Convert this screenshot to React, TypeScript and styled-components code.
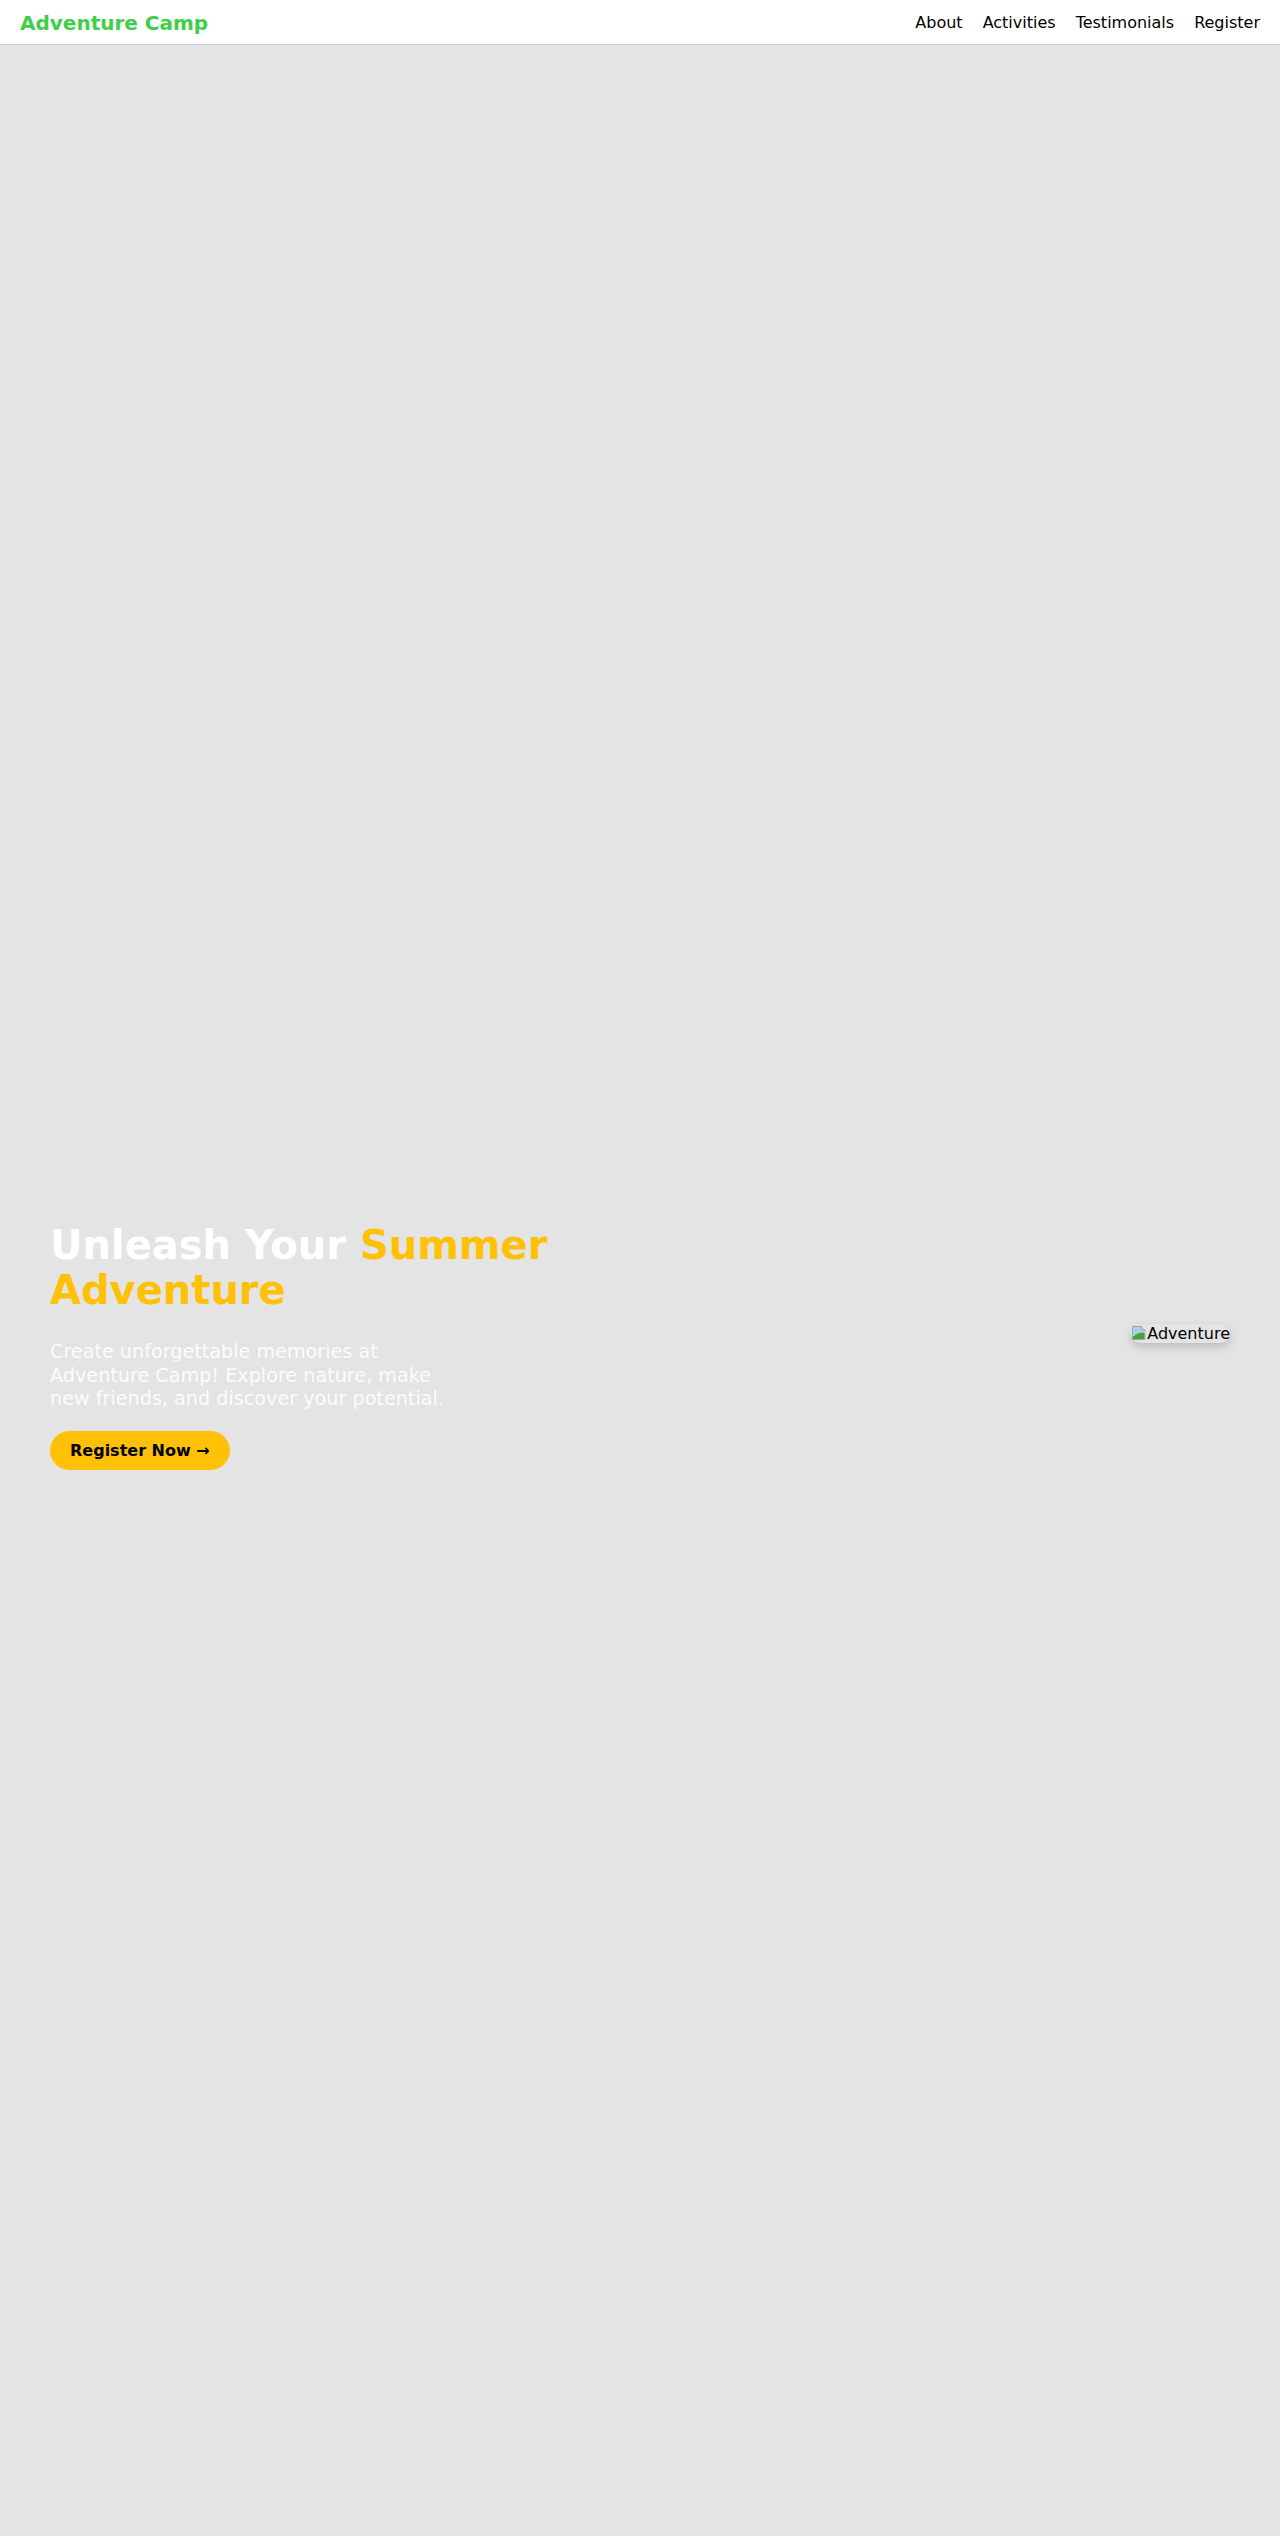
import styled, { createGlobalStyle } from 'styled-components';

const GlobalStyle = createGlobalStyle`
  * {
    box-sizing: border-box;
  }

  body {
    margin: 0;
    font-family: "DejaVu Sans", "Liberation Sans", sans-serif;
    background: #e4e4e4;
  }
`;

const Header = styled.header`
  display: flex;
  justify-content: space-between;
  align-items: center;
  height: 45px;
  padding: 1px 20px 0;
  background: #fff;
  border-bottom: 1px solid #cbcbcb;
`;

const Logo = styled.div`
  color: #3ecf4a;
  font-size: 20px;
  font-weight: 700;
`;

const Nav = styled.nav`
  display: flex;
  gap: 20px;
`;

const NavLink = styled.a`
  color: #000;
  font-size: 16px;
  text-decoration: none;
`;

const Hero = styled.section`
  display: flex;
  justify-content: space-between;
  align-items: center;
  min-height: 2536px;
  padding: 20px 50px;
  box-sizing: content-box;
  background: #e4e4e4;
`;

const Content = styled.div`
  max-width: 600px;
`;

const Title = styled.h1`
  margin: 27px 0;
  color: #fff;
  font-size: 40px;
  line-height: 45px;
  font-weight: 700;
`;

const Accent = styled.span`
  color: #ffc107;
`;

const Lead = styled.p`
  max-width: 400px;
  margin: 0;
  color: rgba(255, 255, 255, 0.92);
  font-size: 19.2px;
  line-height: 23.5px;
`;

const CtaButton = styled.a`
  display: inline-block;
  margin-top: 20px;
  padding: 10px 20px;
  border-radius: 25px;
  background: #ffc107;
  color: #000;
  font-size: 16px;
  font-weight: 700;
  text-decoration: none;
`;

const Picture = styled.div`
  display: flex;
  align-items: center;
  border-radius: 10px;
  box-shadow: 0 4px 10px rgba(0, 0, 0, 0.18);
  color: #000;
  font-size: 16px;
  line-height: 19px;
`;

const BrokenIcon = () => (
  <svg width="16" height="16" viewBox="0 0 16 16">
    <path d="M1.5 1.5h9l3.5 3.5v9.5h-12.5z" fill="#eef3f9" stroke="#9aa3ae" />
    <path d="M2 2h8.3v3.2H13.5V10H2z" fill="#aacdf0" />
    <path d="M2 14v-2.5c3-3 7.5-4.5 11.5-3.5v6z" fill="#46a23a" />
    <path d="M10.5 1.5v3.5h3.5" fill="#dde3ea" stroke="#9aa3ae" />
  </svg>
);

export default function App() {
  return (
    <>
      <GlobalStyle />
      <Header>
        <Logo>Adventure Camp</Logo>
        <Nav>
          <NavLink href="#about">About</NavLink>
          <NavLink href="#activities">Activities</NavLink>
          <NavLink href="#testimonials">Testimonials</NavLink>
          <NavLink href="#register">Register</NavLink>
        </Nav>
      </Header>
      <Hero>
        <Content>
          <Title>
            Unleash Your <Accent>Summer Adventure</Accent>
          </Title>
          <Lead>
            Create unforgettable memories at Adventure Camp! Explore nature, make new friends, and discover your potential.
          </Lead>
          <CtaButton href="#register">Register Now →</CtaButton>
        </Content>
        <Picture>
          <BrokenIcon />
          Adventure
        </Picture>
      </Hero>
    </>
  );
}
